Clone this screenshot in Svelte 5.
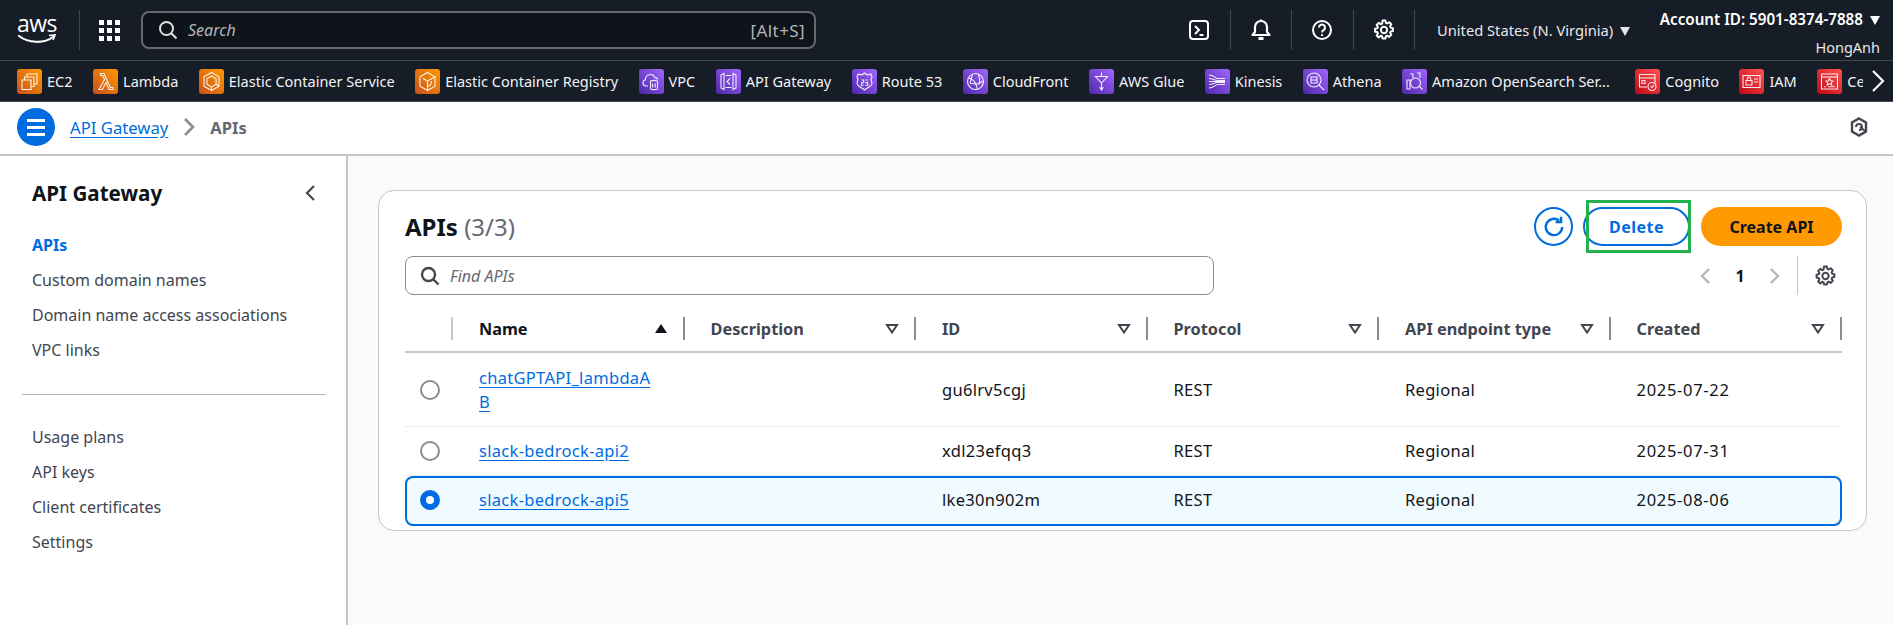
<script>
  const favourites = [
    { label: 'EC2', tone: 'orange', paths: ['M10 8V5h10v10h-3', 'M7.5 11V8H17v9.5h-3', 'M5 11h9v9.5H5z'] },
    { label: 'Lambda', tone: 'orange', paths: ['M6 20.5h3.5l3.6-7.2L16 20.5h4v-2h-2.6L11 4.5H7.5v2h2.2l1.9 4z'] },
    { label: 'Elastic Container Service', tone: 'orange', paths: ['M12.5 3.5l7.5 4.3v9.4l-7.5 4.3L5 17.2V7.8z', 'M12.5 7l4.6 2.7v5.6L12.5 18l-4.6-2.7V9.7z', 'M12.5 18v3.5M17.1 15.3l2.9 1.9'] },
    { label: 'Elastic Container Registry', tone: 'orange', paths: ['M12.5 3.5l7.5 4.3v9.4l-7.5 4.3L5 17.2V7.8z', 'M12.5 21.5V12l7.5-4.2M12.5 12L8 9.5', 'M12.5 17c3 0 4-2 4-5'] },
    { label: 'VPC', tone: 'purple', paths: ['M9 17H7a3.2 3.2 0 0 1-.6-6.3A5 5 0 0 1 16 8.6a3.4 3.4 0 0 1 3 1.9', 'M11.5 12.5c0-1.5 7-1.5 7 0v7c0 1.5-7 1.5-7 0z', 'M13.7 14.5v4M16.2 14.5v4'] },
    { label: 'API Gateway', tone: 'purple', paths: ['M5 6l3-1.5v16L5 19z', 'M20 6l-3-1.5v16l3-1.5z', 'M14 9.5l-3 3 3 3', 'M9.5 6.5h6M9.5 18.5h6'] },
    { label: 'Route 53', tone: 'purple', paths: ['M12.5 4l2.5 1.8 4-.6 1 3-1 2.2 1 3.6c0 3.5-5 4.5-7.5 7-2.5-2.5-7.5-3.5-7.5-7l1-3.6-1-2.2 1-3 4 .6z', 'M9.5 11h2.2v2.8H9.5v2.4h2.2M13.5 11h2.2M13.5 13.6h2.2v2.6h-2.2'] },
    { label: 'CloudFront', tone: 'purple', paths: ['M12.5 4.5a8 8 0 1 1 0 16 8 8 0 0 1 0-16z', 'M5.5 9c3 .5 6 3 7.5 6.5s1.5 3.5 1 5', 'M9.5 5c-1 3-1 6-2.5 9', 'M15 5c2 3 2 7 1 10M7 14.5l9 .5 4-3'] },
    { label: 'AWS Glue', tone: 'purple', paths: ['M6.5 7.5h12L12.5 14z', 'M12.5 14v7', 'M10.5 18l2 3 2-3', 'M12.5 3.5v4'] },
    { label: 'Kinesis', tone: 'purple', paths: ['M4 6c5 0 6 3.5 9 3.5h7M4 9.5c4 0 5 2 9 2h7M4 12.5h16M4 15.5c4 0 5-2 9-2h7M4 19c5 0 6-3.5 9-3.5h7'] },
    { label: 'Athena', tone: 'purple', paths: ['M11 4a7 7 0 1 1 0 14 7 7 0 0 1 0-14z', 'M16 16l5 5', 'M8 8h6v6H8z', 'M8 11h6'] },
    { label: 'Amazon OpenSearch Ser...', tone: 'purple', cut: true, paths: ['M13.5 9a5 5 0 1 1 0 10 5 5 0 0 1 0-10z', 'M17 17l3.5 3.5', 'M5 11h3v9H5zM8 5h3v4M15 4h3v5'] },
    { label: 'Cognito', tone: 'red', paths: ['M4.5 5.5h15.5v9', 'M4.5 5.5v12.5H12', 'M4.5 9H20', 'M7 11.5h3v3H7z', 'M17 13.5a4 4 0 1 1 0 8 4 4 0 0 1 0-8z', 'M15.5 17.5l1.5 1 2-2.5'] },
    { label: 'IAM', tone: 'red', paths: ['M4 6.5h17v12H4z', 'M7 11.5h6V16H7zM8.3 11.5V9.8a1.7 1.7 0 0 1 3.4 0v1.7', 'M15 10h4M15 13h4'] },
    { label: 'Certificate Manager', tone: 'red', paths: ['M4.5 5h16v15h-16z', 'M4.5 8h16', 'M12.5 9.5l1.2 2.3 2.3.3-1.7 1.6.5 2.3-2.3-1.2-2.3 1.2.5-2.3L9 12.1l2.3-.3z', 'M7 17.8h2M11 17.8h7'] }
  ];

  const navTop = ['Custom domain names', 'Domain name access associations', 'VPC links'];
  const navBottom = ['Usage plans', 'API keys', 'Client certificates', 'Settings'];
  const columns = ['Description', 'ID', 'Protocol', 'API endpoint type', 'Created'];
  const apis = [
    { name: 'chatGPTAPI_lambdaAB', id: 'gu6lrv5cgj', created: '2025-07-22' },
    { name: 'slack-bedrock-api2', id: 'xdl23efqq3', created: '2025-07-31' },
    { name: 'slack-bedrock-api5', id: 'lke30n902m', created: '2025-08-06', selected: true }
  ];
  const gearPath = 'M8.6 1.5h2.8l.4 2.2 1.3.6 1.9-1.2 2 2-1.2 1.9.6 1.3 2.1.4v2.8l-2.1.4-.6 1.3 1.2 1.9-2 2-1.9-1.2-1.3.6-.4 2.1H8.6l-.4-2.1-1.3-.6L5 17.7l-2-2 1.2-1.9-.6-1.3-2.1-.4V9.3l2.1-.4.6-1.3L3 5.7l2-2 1.9 1.2 1.3-.6z M10 7.5a3 3 0 1 0 0 6 3 3 0 0 0 0-6z';
</script>

<div class="page">
  <header class="topbar">
    <div class="logo">
      <span class="logo-word">aws</span>
      <svg width="40" height="12" viewBox="0 0 40 12" fill="none"><path d="M2 2c9 7 25 8 34 1" stroke="#fff" stroke-width="2.2" stroke-linecap="round"/><path d="M32 1.5l6-.5-2 5" stroke="#fff" stroke-width="1.6" fill="none"/></svg>
    </div>
    <span class="top-rule"></span>
    <div class="apps">
      {#each Array(9) as _}<span></span>{/each}
    </div>
    <div class="search">
      <svg width="20" height="20" viewBox="0 0 20 20" fill="none" stroke="#dedee3" stroke-width="2"><circle cx="8.5" cy="8.5" r="6.5"/><path d="M13.5 13.5l5 5"/></svg>
      <span class="search-text">Search</span>
      <span class="search-key">[Alt+S]</span>
    </div>
    <div class="top-icons">
      <span class="top-icon">
        <svg width="22" height="22" viewBox="0 0 22 22" fill="none" stroke="#fff" stroke-width="2"><rect x="2" y="2" width="18" height="18" rx="3"/><path d="M7 7l4 4-4 4M11.5 16h4"/></svg>
      </span>
      <span class="top-icon">
        <svg width="22" height="24" viewBox="0 0 22 24" fill="none" stroke="#fff" stroke-width="2.2"><path d="M2.5 17h17L17 14V9A6 6 0 0 0 5 9v5z" stroke-linejoin="round"/><path d="M8.5 20.5h5" stroke-width="3"/><path d="M11 1.5V3"/></svg>
      </span>
      <span class="top-icon">
        <svg width="22" height="22" viewBox="0 0 22 22" fill="none" stroke="#fff" stroke-width="2"><circle cx="11" cy="11" r="9"/><path d="M8 8.5a3 3 0 1 1 4.500 2.600c-1 .6-1.500 1-1.500 2.400"/><path d="M11 15.200V17"/></svg>
      </span>
      <span class="top-icon">
        <svg width="22" height="22" viewBox="0 0 20 21" fill="none" stroke="#fff" stroke-width="1.9" stroke-linejoin="round"><path d={gearPath}/></svg>
      </span>
    </div>
    <div class="region">United States (N. Virginia)<i class="caret"></i></div>
    <div class="account">
      <div class="account-id">Account ID: 5901-8374-7888<i class="caret"></i></div>
      <div class="account-name">HongAnh</div>
    </div>
  </header>

  <nav class="favbar">
    <div class="fav-list">
      {#each favourites as fav}
        <span class="fav" class:cut={fav.cut}>
          <span class="fav-icon {fav.tone}">
            <svg width="25" height="25" viewBox="0 0 25 25" fill="none" stroke="#fff" stroke-width="1.1" stroke-opacity="0.9">
              {#each fav.paths as d}<path {d}/>{/each}
            </svg>
          </span>
          {fav.label}
        </span>
      {/each}
    </div>
    <svg class="fav-next" width="14" height="24" viewBox="0 0 14 24" fill="none" stroke="#fff" stroke-width="2.2"><path d="M2 2l10 10L2 22"/></svg>
  </nav>

  <div class="crumbs">
    <button class="burger" aria-label="Open navigation">
      <span></span><span></span><span></span>
    </button>
    <a class="crumb-link" href="#gateway">API Gateway</a>
    <svg width="12" height="20" viewBox="0 0 12 20" fill="none" stroke="#8c8c94" stroke-width="2.6"><path d="M2 2l8 8-8 8"/></svg>
    <span class="crumb-current">APIs</span>
    <svg class="crumb-end" width="18" height="20" viewBox="0 0 18 20" fill="none" stroke="#424650" stroke-width="2.4"><path d="M9 1.500l7 4v9l-7 4-7-4v-9z"/><path d="M6 10a3 3 0 1 1 6 0 3 3 0 0 1-3 3" stroke-width="2"/><path d="M10 10l5 4" stroke-width="2"/></svg>
  </div>

  <div class="body">
    <aside class="side">
      <div class="side-head">
        <h2>API Gateway</h2>
        <svg width="12" height="18" viewBox="0 0 12 18" fill="none" stroke="#424650" stroke-width="2.2"><path d="M10 2L3 9l7 7"/></svg>
      </div>
      <ul>
        <li class="active">APIs</li>
        {#each navTop as item}<li>{item}</li>{/each}
      </ul>
      <hr />
      <ul>
        {#each navBottom as item}<li>{item}</li>{/each}
      </ul>
    </aside>

    <main class="main">
      <section class="card">
        <div class="card-head">
          <h1>APIs <span>(3/3)</span></h1>
          <div class="actions">
            <button class="refresh" aria-label="Refresh">
              <svg width="24" height="24" viewBox="0 0 22 22" fill="none" stroke="#006ce0" stroke-width="2.2"><path d="M18.5 11a7.5 7.5 0 1 1-2.7-5.800"/><path d="M17.5 1.5v5h-5"/></svg>
            </button>
            <button class="btn-delete">Delete</button>
            <span class="mark"></span>
            <button class="btn-create">Create API</button>
          </div>
        </div>

        <div class="tools">
          <div class="filter">
            <svg width="20" height="20" viewBox="0 0 20 20" fill="none" stroke="#424650" stroke-width="2.4"><circle cx="8.5" cy="8.5" r="6.5"/><path d="M13.5 13.5l5 5"/></svg>
            <span>Find APIs</span>
          </div>
          <div class="pager">
            <svg width="12" height="18" viewBox="0 0 12 18" fill="none" stroke="#b4b4bb" stroke-width="2.4"><path d="M10 2L3 9l7 7"/></svg>
            <b>1</b>
            <svg width="12" height="18" viewBox="0 0 12 18" fill="none" stroke="#b4b4bb" stroke-width="2.4"><path d="M2 2l7 7-7 7"/></svg>
            <span class="pager-rule"></span>
            <svg width="21" height="22" viewBox="0 0 20 21" fill="none" stroke="#424650" stroke-width="1.9" stroke-linejoin="round"><path d={gearPath}/></svg>
          </div>
        </div>

        <div class="table">
          <div class="thead">
            <div class="th select"></div>
            <div class="th sorted">
              Name
              <svg width="14" height="11" viewBox="0 0 14 11"><path d="M7 1l6 9H1z" fill="#0f141a"/></svg>
            </div>
            {#each columns as col}
              <div class="th">
                {col}
                <svg width="14" height="11" viewBox="0 0 14 11"><path d="M2 2h10L7 9.5z" fill="none" stroke="#424650" stroke-width="2"/></svg>
              </div>
            {/each}
          </div>
          {#each apis as api}
            <div class="row" class:selected={api.selected}>
              <div class="cell radio-cell"><span class="radio"></span></div>
              <div class="cell"><a class="name" href="#api">{api.name}</a></div>
              <div class="cell"></div>
              <div class="cell">{api.id}</div>
              <div class="cell">REST</div>
              <div class="cell">Regional</div>
              <div class="cell date">{api.created}</div>
            </div>
          {/each}
        </div>
      </section>
    </main>
  </div>
</div>

<style>
  :global(body) {
    margin: 0;
    overflow: hidden;
  }

  .page {
    width: 1893px;
    height: 625px;
    display: flex;
    flex-direction: column;
    font-family: "Noto Sans", "Open Sans", sans-serif;
    font-size: 16px;
    color: #0f141a;
    background: #fafafa;
    overflow: hidden;
  }

  /* top bar */
  .topbar {
    height: 60px;
    flex: none;
    display: flex;
    align-items: center;
    background: #161d26;
    color: #fff;
    box-sizing: border-box;
    padding-left: 17px;
  }

  .logo {
    width: 40px;
    height: 40px;
    display: flex;
    flex-direction: column;
    align-items: center;
    margin-top: 1px;
  }

  .logo-word {
    font-size: 23px;
    line-height: 25px;
    height: 24px;
    letter-spacing: -0.5px;
    font-family: "Open Sans", sans-serif;
  }

  .logo svg {
    margin-top: -1px;
  }

  .top-rule {
    width: 1px;
    height: 40px;
    margin-left: 22px;
    background: #414750;
  }

  .apps {
    width: 21px;
    display: grid;
    grid-template-columns: repeat(3, 5px);
    gap: 3px;
    margin-left: 19px;
  }

  .apps span {
    height: 5px;
    background: #fff;
  }

  .search {
    width: 675px;
    height: 38px;
    margin-left: 21px;
    box-sizing: border-box;
    padding: 0 9px 0 15px;
    display: flex;
    align-items: center;
    background: #0f141a;
    border: 2px solid #656871;
    border-radius: 8px;
    color: #b4b4bb;
    font-size: 16px;
  }

  .search-text {
    margin-left: 10px;
    font-style: italic;
    flex: 1;
  }

  .search-key {
    font-size: 17px;
    letter-spacing: 0.4px;
  }

  .top-icons {
    display: flex;
    margin-left: 353px;
  }

  .top-icon {
    width: 61.5px;
    height: 40px;
    display: flex;
    align-items: center;
    justify-content: center;
    border-right: 1px solid #414750;
    box-sizing: border-box;
  }

  .region {
    margin-left: 22px;
    width: 205px;
    font-size: 14.7px;
    color: #e8e8ec;
    white-space: nowrap;
  }

  .caret {
    display: inline-block;
    margin-left: 7px;
    border-left: 5px solid transparent;
    border-right: 5px solid transparent;
    border-top: 9px solid currentColor;
    vertical-align: 0;
  }

  .account {
    width: 238px;
    box-sizing: border-box;
    text-align: right;
    font-size: 15.2px;
    white-space: nowrap;
  }

  .account-id {
    font-weight: 600;
    color: #fff;
    line-height: 33px;
  }

  .account-name {
    font-size: 14.5px;
    color: #e8e8ec;
    line-height: 22px;
  }

  /* favourites */
  .favbar {
    height: 42px;
    flex: none;
    display: flex;
    align-items: center;
    box-sizing: border-box;
    padding-left: 17px;
    background: #161d26;
    border-top: 1px solid #414750;
    border-bottom: 1px solid #414750;
    color: #f3f3f7;
    font-size: 14.5px;
  }

  .fav-list {
    width: 1846px;
    flex: none;
    display: flex;
    gap: 20.5px;
    overflow: hidden;
    white-space: nowrap;
  }

  .fav {
    display: flex;
    align-items: center;
    gap: 5px;
  }

  .fav.cut {
    margin-right: 5px;
  }

  .fav-icon {
    width: 25px;
    height: 25px;
    flex: none;
    border-radius: 3px;
    display: flex;
  }

  .orange { background: linear-gradient(45deg, #c8511b, #ff9900); }
  .purple { background: linear-gradient(45deg, #4d27a8, #a166ff); }
  .red { background: linear-gradient(45deg, #bd0816, #ff5252); }

  .fav-next {
    margin-left: 8px;
  }

  /* breadcrumbs */
  .crumbs {
    height: 54px;
    flex: none;
    display: flex;
    align-items: center;
    box-sizing: border-box;
    padding: 0 25px 2px 17px;
    background: #fff;
    border-bottom: 2px solid #c6c6cd;
  }

  .burger {
    width: 38px;
    height: 38px;
    padding: 0;
    border: none;
    border-radius: 50%;
    background: #006ce0;
    display: flex;
    flex-direction: column;
    align-items: center;
    justify-content: center;
    gap: 4px;
    margin-right: 15px;
  }

  .burger span {
    width: 18px;
    height: 3px;
    background: #fff;
  }

  .crumb-link {
    font-size: 16.7px;
    color: #006ce0;
    text-underline-offset: 3px;
    margin-right: 15px;
  }

  .crumb-current {
    font-size: 16.5px;
    margin-left: 15px;
    font-weight: 700;
    color: #656871;
  }

  .crumb-end {
    margin-left: auto;
  }

  .body {
    flex: 1;
    display: flex;
    min-height: 0;
  }

  /* side navigation */
  .side {
    width: 348px;
    flex: none;
    box-sizing: border-box;
    background: #fff;
    border-right: 2px solid #c6c6cd;
    padding: 20px 20px 0 32px;
    color: #424650;
  }

  .side-head {
    display: flex;
    align-items: center;
    justify-content: space-between;
    padding-right: 10px;
    height: 34px;
  }

  .side h2 {
    margin: 0;
    font-size: 20.6px;
    font-weight: 700;
    color: #0f141a;
  }

  .side ul {
    list-style: none;
    margin: 18px 0 0;
    padding: 0;
  }

  .side li {
    height: 35px;
    line-height: 35px;
    white-space: nowrap;
  }

  .side li.active {
    color: #006ce0;
    font-weight: 700;
  }

  .side hr {
    margin: 26px 0 0 -10px;
    border: none;
    border-top: 1px solid #b4b4bb;
  }

  .side hr + ul {
    margin-top: 25px;
  }

  /* content */
  .main {
    flex: 1;
    padding: 34px 26px 0 30px;
    min-width: 0;
  }

  .card {
    box-sizing: border-box;
    height: 341px;
    padding: 16px 24px 0 26px;
    background: #fff;
    border: 1px solid #c6c6cd;
    border-radius: 16px;
  }

  .card-head {
    display: flex;
    justify-content: space-between;
    align-items: center;
    height: 39px;
  }

  h1 {
    margin: 0;
    font-size: 24px;
    font-weight: 700;
  }

  h1 span {
    font-weight: 400;
    color: #656871;
  }

  .actions {
    display: flex;
    align-items: center;
    position: relative;
  }

  .refresh {
    width: 39px;
    height: 39px;
    padding: 0;
    border: 2px solid #006ce0;
    border-radius: 50%;
    background: #fff;
    display: flex;
    align-items: center;
    justify-content: center;
    margin-right: 10px;
  }

  .btn-delete, .btn-create {
    height: 39px;
    border-radius: 20px;
    font: 700 16px "Noto Sans", sans-serif;
    padding: 0;
  }

  .btn-delete {
    width: 107px;
    background: #fff;
    border: 2px solid #006ce0;
    color: #006ce0;
    letter-spacing: 0.5px;
    margin-right: 11px;
  }

  /* hand-drawn highlight over the Delete button */
  .mark {
    position: absolute;
    left: 52px;
    top: -7px;
    width: 105px;
    height: 53px;
    box-sizing: border-box;
    border: 3px solid #22b14c;
    pointer-events: none;
  }

  .btn-create {
    width: 141px;
    background: #ff9900;
    border: none;
    color: #0f141a;
  }

  .tools {
    display: flex;
    justify-content: space-between;
    align-items: center;
    margin-top: 10px;
  }

  .filter {
    width: 809px;
    height: 39px;
    box-sizing: border-box;
    border: 1px solid #8c8c94;
    border-radius: 8px;
    display: flex;
    align-items: center;
    gap: 10px;
    padding-left: 14px;
    font-size: 16px;
    font-style: italic;
    color: #656871;
  }

  .pager {
    display: flex;
    align-items: center;
    width: 143px;
    height: 39px;
  }

  .pager b {
    width: 58px;
    text-align: center;
    font-weight: 700;
  }

  .pager-rule {
    width: 1px;
    height: 39px;
    background: #c6c6cd;
    margin: 0 17px 0 16px;
  }

  /* table */
  .thead, .row {
    display: grid;
    grid-template-columns: 48px repeat(6, 1fr);
  }

  .thead {
    height: 42px;
    margin-top: 16px;
    padding-top: 6px;
    align-items: start;
    border-bottom: 2px solid #c6c6cd;
    box-sizing: border-box;
  }

  .th {
    height: 23px;
    display: flex;
    align-items: center;
    justify-content: space-between;
    box-sizing: border-box;
    padding: 0 15px 0 26px;
    border-right: 2px solid #8c8c94;
    font-size: 16.3px;
    font-weight: 700;
    color: #424650;
  }

  .th.select {
    border-right-color: #c6c6cd;
    padding: 0;
  }

  .th.sorted {
    color: #0f141a;
  }

  .row {
    min-height: 49px;
    align-items: center;
    box-sizing: border-box;
    border-bottom: 1px solid #ebebf0;
  }

  .thead + .row {
    min-height: 74px;
  }

  .row.selected {
    height: 50px;
    padding-bottom: 3px;
    border-bottom: none;
    border-radius: 8px;
    background: #f0fbff;
    box-shadow: inset 0 0 0 2px #006ce0;
  }

  .cell {
    padding-left: 26px;
    box-sizing: border-box;
    font-size: 16.5px;
    letter-spacing: 0.3px;
    line-height: 24px;
  }

  .cell.date {
    letter-spacing: 0.7px;
  }

  .radio-cell {
    padding-left: 15px;
    display: flex;
  }

  .radio {
    width: 20px;
    height: 20px;
    box-sizing: border-box;
    border: 2px solid #8c8c94;
    border-radius: 50%;
    background: #fff;
  }

  .selected .radio {
    border: 6px solid #006ce0;
  }

  .name {
    display: block;
    width: 174px;
    color: #006ce0;
    overflow-wrap: anywhere;
    text-underline-offset: 3px;
  }
</style>
